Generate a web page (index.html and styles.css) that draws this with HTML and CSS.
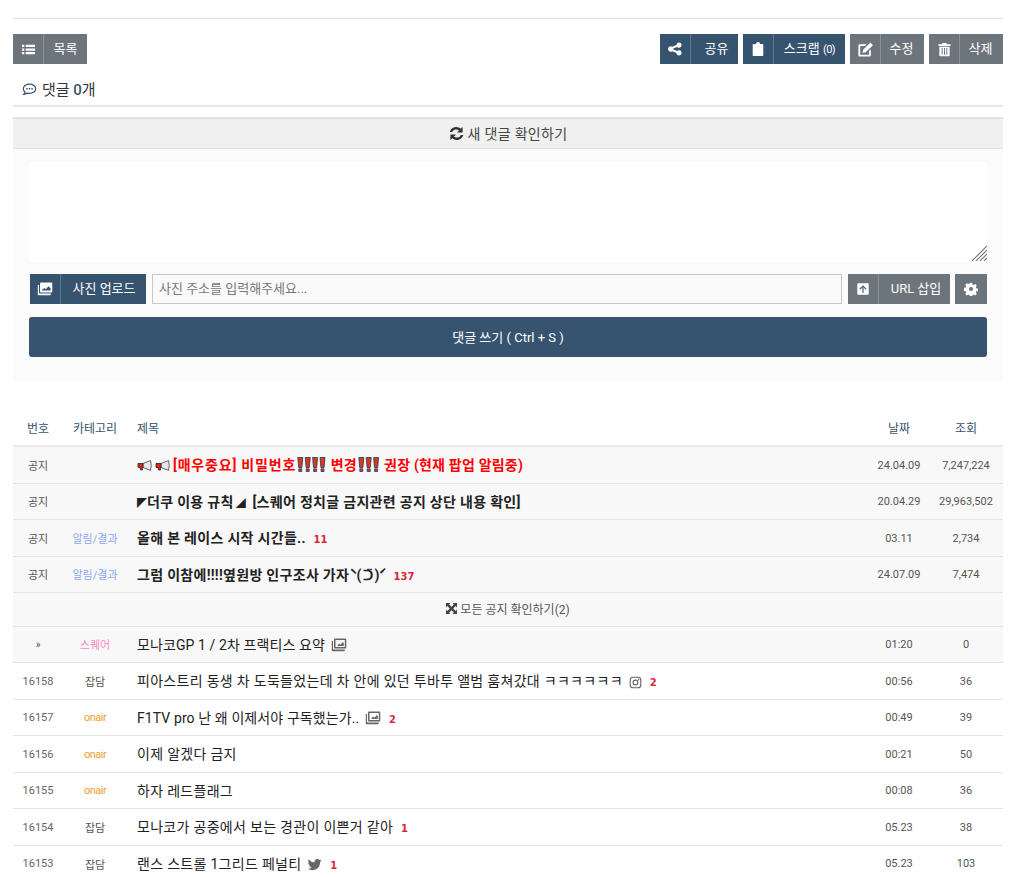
FILE: index.html
```html
<!DOCTYPE html>
<html lang="ko">
<head>
<meta charset="utf-8">
<title>댓글</title>
<link rel="stylesheet" href="styles.css">
</head>
<body>
<div class="page">
  <hr class="top-rule">
  <div class="toolbar">
    <a class="btn gray list"><span class="ico"><svg viewBox="0 0 16 16" width="15" height="15"><path fill="currentColor" d="M1 3h2.500v2.400H1zM5 3h10v2.400H5zM1 6.800h2.500v2.400H1zM5 6.800h10v2.400H5zM1 10.600h2.500V13H1zM5 10.600h10V13H5z"/></svg></span><span class="lab">목록</span></a>
    <div class="actions">
      <a class="btn navy share"><span class="ico"><svg viewBox="0 0 16 16" width="16" height="16"><path fill="currentColor" d="M12 1.500a2.600 2.600 0 1 1-1.900 4.400L6.300 7.600a2.700 2.700 0 0 1 0 .8l3.800 1.700A2.600 2.600 0 1 1 9.400 12L5.300 10.200a2.700 2.700 0 1 1 0-4.400L9.400 4A2.600 2.600 0 0 1 12 1.500z"/></svg></span><span class="lab">공유</span></a>
      <a class="btn navy scrap"><span class="ico"><svg viewBox="0 0 16 16" width="16" height="16"><path fill="currentColor" d="M3.500 3H6a2 2 0 0 1 4 0h2.500a.8.800 0 0 1 .8.800v10.400a.8.800 0 0 1-.8.800h-9a.8.800 0 0 1-.8-.8V3.800a.8.800 0 0 1 .8-.8z"/></svg></span><span class="lab">스크랩 <small>(0)</small></span></a>
      <a class="btn gray edit"><span class="ico"><svg viewBox="0 0 16 16" width="17" height="17"><path fill="currentColor" d="M2.500 3H9L7.500 4.600H3v8.400h8.400V9.300L13 7.700v5.800a1.200 1.200 0 0 1-1.200 1.200H2.500a1.200 1.200 0 0 1-1.200-1.200V4.200A1.200 1.200 0 0 1 2.500 3zM12.600 1.500l2.400 2.400-6.800 6.800-3 .6.600-3z"/></svg></span><span class="lab">수정</span></a>
      <a class="btn gray del"><span class="ico"><svg viewBox="0 0 16 16" width="15" height="15"><path fill="currentColor" fill-rule="evenodd" d="M6 1h4l.8 1.500h3.700v1.700h-13V2.500h3.700zM2.500 5h11v9a1.200 1.200 0 0 1-1.200 1.200H3.700A1.200 1.200 0 0 1 2.500 14zM5 6.500v7h1v-7zM7.500 6.500v7h1v-7zM10 6.500v7h1v-7z"/></svg></span><span class="lab">삭제</span></a>
    </div>
  </div>

  <h3 class="comment-title"><svg viewBox="0 0 16 16" width="15" height="15"><path fill="none" stroke="currentColor" stroke-width="1.300" d="M8 2.200c3.700 0 6.600 2.200 6.600 5s-2.900 5-6.600 5c-.9 0-1.700-.1-2.500-.4-1 .8-2.200 1.200-3.500 1.300.6-.6 1.100-1.500 1.200-2.400C2.200 9.800 1.400 8.600 1.400 7.200c0-2.800 2.900-5 6.600-5z"/><path fill="currentColor" d="M4.500 6.400h1.500v1.500H4.500zM7.250 6.400h1.500v1.500h-1.500zM10 6.400h1.500v1.500H10z"/></svg><span>댓글 <b>0</b>개</span></h3>

  <div class="refresh"><svg viewBox="0 0 16 16" width="15" height="15"><path fill="currentColor" d="M14.500 1V7H8.500L10.700 4.800A4.700 4.700 0 0 0 3.300 6.500H.7A7.200 7.200 0 0 1 12.500 3zM1.500 15V9H7.500L5.300 11.200A4.700 4.700 0 0 0 12.700 9.500H15.300A7.200 7.200 0 0 1 3.500 13z"/></svg><span>새 댓글 확인하기</span></div>

  <div class="write">
    <div class="textarea"><svg class="grip" viewBox="0 0 16 16" width="16" height="16"><path stroke="#777" stroke-width="1.100" d="M1 16 16 1M5 16 16 5M9 16l7-7M13 16l3-3"/></svg></div>
    <div class="url-row">
      <a class="btn navy upload"><span class="ico"><svg viewBox="0 1 16 16" width="16" height="16"><path fill="currentColor" fill-rule="evenodd" d="M4 2.500h10.300a1 1 0 0 1 1 1v8a1 1 0 0 1-1 1H4a1 1 0 0 1-1-1v-8a1 1 0 0 1 1-1zM5 4.300v6.200h8.500V8.200l-2-2-2.700 3-1.500-1.300L5 10z"/><path fill="currentColor" d="M.8 5H2v7.500A1 1 0 0 0 3 13.500h10.800v.9a.8.800 0 0 1-.8.800H1.600a.8.800 0 0 1-.8-.8z"/></svg></span><span class="lab">사진 업로드</span></a>
      <div class="url-input">사진 주소를 입력해주세요...</div>
      <a class="btn gray urlbtn"><span class="ico"><svg viewBox="0 0 16 16" width="14" height="14"><path fill="currentColor" fill-rule="evenodd" d="M2.500 1.500h11a1 1 0 0 1 1 1v11a1 1 0 0 1-1 1h-11a1 1 0 0 1-1-1v-11a1 1 0 0 1 1-1zM8 3.500 3.800 7.700l1.100 1.100L7.200 6.600v6h1.600v-6l2.300 2.200 1.100-1.100z"/></svg></span><span class="lab">URL 삽입</span></a>
      <a class="btn gray gear"><svg viewBox="0 0 16 16" width="14" height="14"><path fill="currentColor" fill-rule="evenodd" d="M6.700.8h2.600l.4 2 1.400.6 1.700-1.100 1.800 1.800-1.100 1.700.6 1.400 2 .4v2.600l-2 .4-.6 1.400 1.100 1.700-1.800 1.800-1.700-1.100-1.400.6-.4 2H6.700l-.4-2-1.400-.6-1.700 1.100-1.800-1.800 1.100-1.700-.6-1.400-2-.4V6.600l2-.4.6-1.400-1.100-1.700 1.800-1.800 1.700 1.100 1.400-.6zM8 5.700a2.300 2.300 0 1 0 0 4.600 2.300 2.300 0 0 0 0-4.600z"/></svg></a>
    </div>
    <a class="submit">댓글 쓰기 ( Ctrl + S )</a>
  </div>

  <div class="board">
    <div class="row head"><div class="num">번호</div><div class="cat">카테고리</div><div class="title">제목</div><div class="date">날짜</div><div class="views">조회</div></div>

    <div class="row notice"><div class="num">공지</div><div class="cat"></div><div class="title strong red"><svg class="emo" viewBox="0 0 16 11" width="16" height="11"><use href="#horn"/></svg><svg class="emo" viewBox="0 0 16 11" width="16" height="11"><use href="#horn"/></svg><span class="wide">[매우중요] 비밀번호</span><svg class="bang" viewBox="0 0 29 15" width="29" height="15"><use href="#b"/></svg> 변경<svg class="bang" viewBox="0 0 21.500 15" width="21.500" height="15"><use href="#b"/></svg> 권장 (현재 팝업 알림중)</div><div class="date">24.04.09</div><div class="views">7,247,224</div></div>
    <div class="row notice"><div class="num">공지</div><div class="cat"></div><div class="title strong"><span class="tri">◤</span>더쿠 이용 규칙<span class="tri end">◢</span> [스퀘어 정치글 금지관련 공지 상단 내용 확인]</div><div class="date">20.04.29</div><div class="views">29,963,502</div></div>
    <div class="row notice"><div class="num">공지</div><div class="cat blue">알림/결과</div><div class="title strong">올해 본 레이스 시작 시간들.. <b class="cnt">11</b></div><div class="date">03.11</div><div class="views">2,734</div></div>
    <div class="row notice"><div class="num">공지</div><div class="cat blue">알림/결과</div><div class="title strong">그럼 이참에!!!!옆원방 인구조사 가자<span class="face">ˋ( ᑐ̈ )ˊ</span> <b class="cnt">137</b></div><div class="date">24.07.09</div><div class="views">7,474</div></div>

    <div class="all-notice"><svg viewBox="0 0 16 16" width="11" height="11"><path fill="currentColor" d="M0 0h6.500L4.500 2 8 5.500 11.500 2l-2-2H16v6.500l-2-2L10.500 8l3.500 3.500 2-2V16H9.500l2-2L8 10.500 4.500 14l2 2H0V9.500l2 2L5.500 8 2 4.500l-2 2z"/></svg><span>모든 공지 확인하기<span class="paren">(2)</span></span></div>

    <div class="row notice"><div class="num small">»</div><div class="cat pink">스퀘어</div><div class="title mix">모나코GP 1 / 2차 프랙티스 요약<svg class="att" viewBox="0 1 16 16" width="16" height="16"><use href="#pic"/></svg></div><div class="date">01:20</div><div class="views">0</div></div>
    <div class="row"><div class="num">16158</div><div class="cat">잡담</div><div class="title">피아스트리 동생 차 도둑들었는데 차 안에 있던 투바투 앨범 훔쳐갔대 ㅋㅋㅋㅋㅋㅋ<svg class="att" viewBox="0 0 16 16" width="13" height="13"><rect x="1.500" y="1.500" width="13" height="13" rx="3.500" fill="none" stroke="currentColor" stroke-width="1.400"/><circle cx="8" cy="8" r="3" fill="none" stroke="currentColor" stroke-width="1.400"/><circle cx="11.800" cy="4.200" r=".9" fill="currentColor"/></svg> <b class="cnt">2</b></div><div class="date">00:56</div><div class="views">36</div></div>
    <div class="row"><div class="num">16157</div><div class="cat orange">onair</div><div class="title mix">F1TV pro 난 왜 이제서야 구독했는가..<svg class="att" viewBox="0 1 16 16" width="16" height="16"><use href="#pic"/></svg> <b class="cnt">2</b></div><div class="date">00:49</div><div class="views">39</div></div>
    <div class="row"><div class="num">16156</div><div class="cat orange">onair</div><div class="title">이제 알겠다 금지</div><div class="date">00:21</div><div class="views">50</div></div>
    <div class="row"><div class="num">16155</div><div class="cat orange">onair</div><div class="title">하자 레드플래그</div><div class="date">00:08</div><div class="views">36</div></div>
    <div class="row"><div class="num">16154</div><div class="cat">잡담</div><div class="title">모나코가 공중에서 보는 경관이 이쁜거 같아 <b class="cnt">1</b></div><div class="date">05.23</div><div class="views">38</div></div>
    <div class="row"><div class="num">16153</div><div class="cat">잡담</div><div class="title">랜스 스트롤 1그리드 페널티<svg class="att" viewBox="0 0 16 16" width="15" height="15"><path fill="currentColor" d="M15.500 3.400c-.5.300-1.100.400-1.700.500.600-.4 1.100-.9 1.300-1.600-.6.300-1.200.600-1.900.7A3 3 0 0 0 8.100 5.700 8.500 8.500 0 0 1 1.800 2.600a3 3 0 0 0 .9 4c-.5 0-1-.1-1.400-.4 0 1.500 1 2.700 2.400 3-.4.100-.9.100-1.300 0 .4 1.200 1.500 2 2.800 2.100a6 6 0 0 1-4.400 1.300A8.500 8.500 0 0 0 14 5.200c.6-.5 1.100-1.100 1.500-1.800z"/></svg> <b class="cnt">1</b></div><div class="date">05.23</div><div class="views">103</div></div>
  </div>
</div>
<svg class="defs" width="0" height="0"><defs>
  <g id="bone"><path fill="#d93a12" stroke="#1f3a6b" stroke-width=".8" d="M.8.500h5l-.9 10H1.700z"/><path fill="#d93a12" stroke="#1f3a6b" stroke-width=".8" d="M1.800 11.800h3v2.700h-3z"/></g>
  <g id="b"><use href="#bone"/><use href="#bone" x="7.400"/><use href="#bone" x="14.800"/><use href="#bone" x="22.200"/></g>
  <g id="horn"><path fill="#e8e8e8" stroke="#555" stroke-width=".9" d="M6 3.500 13.500.6q1.500 4.900 0 9.800L6 7.500z"/><path fill="#d9281e" stroke="#222" stroke-width=".8" d="M1 3.500h5v4H5l.6 2.500H3.600L3 7.500H1z"/></g>
  <g id="pic"><path fill="currentColor" fill-rule="evenodd" d="M4 2.500h10.300a1 1 0 0 1 1 1v8a1 1 0 0 1-1 1H4a1 1 0 0 1-1-1v-8a1 1 0 0 1 1-1zM4.500 4v7h9.300V4zM6 10l2.200-2.500 1.300 1.200 2.300-2.700 1 1V10z"/><path fill="currentColor" d="M.8 5H2v7.500A1 1 0 0 0 3 13.500h10.800v.9a.8.800 0 0 1-.8.800H1.600a.8.800 0 0 1-.8-.8z"/></g>
</defs></svg>
</body>
</html>
```
FILE: styles.css
```css
* { box-sizing: border-box; }
html, body { margin: 0; padding: 0; background: #fff; }
body { font-family: Roboto, "Noto Sans CJK KR", sans-serif; font-size: 13px; color: #333; height: 877px; overflow: hidden; }
.page { padding: 18px 12px 0 13px; }
.top-rule { margin: 0; border: 0; border-top: 1px solid #e0e0e0; }
.toolbar { display: flex; justify-content: space-between; margin-top: 15px; }
.actions { display: flex; gap: 5px; }
.btn { display: flex; align-items: stretch; height: 30px; color: #fff; font-size: 13px; line-height: 30px; }
.btn.navy { background: #36536f; }
.btn.gray { background: #6c747c; }
.btn .ico { width: 31px; display: flex; align-items: center; justify-content: center; border-right: 1px solid rgba(255,255,255,.22); flex: none; }
.btn .lab { flex: 1; text-align: center; white-space: nowrap; }
.btn small { font-size: 11px; letter-spacing: -.5px; }
.list { width: 74px; }
.share { width: 78px; }
.share .lab { padding-left: 4px; }
.scrap { width: 102px; }
.edit, .del { width: 74px; }
.edit .lab, .del .lab { padding-right: 2px; }
.comment-title { margin: 16px 0 0; padding: 0 0 0 9px; height: 27px; font-size: 15px; font-weight: 400; line-height: 20px; color: #333; display: flex; align-items: flex-start; gap: 5px; border-bottom: 2px solid #e8e8e8; }
.comment-title svg { color: #36536f; margin-top: 2px; }
.comment-title b { font-weight: 500; color: #36536f; }
.refresh { margin-top: 10px; height: 32px; padding-bottom: 1px; background: #f0f0f0; border-top: 2px solid #e2e2e2; border-bottom: 1px solid #e2e2e2; display: flex; align-items: center; justify-content: center; gap: 4px; font-size: 14px; letter-spacing: .3px; color: #444; }
.refresh svg { color: #333; }
.write { background: #fbfbfb; height: 232px; padding: 13px 16px 0; }
.textarea { height: 100px; background: #fff; display: flex; justify-content: flex-end; align-items: flex-end; }
.grip { display: block; margin-bottom: 1px; }
.url-row { display: flex; margin-top: 12px; padding-left: 1px; }
.upload { width: 116px; }
.upload .lab { padding-left: 1px; }
.url-input { flex: 1; margin: 0 6px; height: 30px; border: 1px solid #c8c8c8; background: #fafafa; padding-left: 6px; line-height: 28px; font-size: 13px; color: #777; }
.urlbtn { width: 102px; }
.urlbtn .lab { padding-left: 3px; }
.gear { width: 32px; margin-left: 5px; align-items: center; justify-content: center; }
.submit { display: block; margin-top: 13px; height: 40px; line-height: 41px; text-align: center; background: #36536f; color: #fff; border-radius: 3px; font-size: 13px; }
.board { margin-top: 29px; }
.row { display: grid; grid-template-columns: 50px 64px 1fr 60px 74px; align-items: center; height: 36.5px; border-bottom: 1px solid #e4e4e4; font-size: 11px; color: #555; }
.row.head { height: 37px; border-bottom: 2px solid #e8e8e8; font-size: 12px; color: #36536f; }
.row.notice { background: #f8f8f8; }
.num, .cat, .date, .views { text-align: center; white-space: nowrap; }
.row:not(.head) .date, .row:not(.head) .views { padding-top: 1px; }
.row:not(.notice):not(.head) .num, .row:not(.notice):not(.head) .cat { padding-top: 1px; }
.row:not(.notice):not(.head) .num { color: #666; }
.title { padding: 0 0 1px 10px; white-space: nowrap; font-size: 14px; letter-spacing: .3px; color: #222; display: block; }
.title.mix { letter-spacing: .1px; }
.head .title { font-size: 12px; letter-spacing: 0; padding-bottom: 0; color: #36536f; }
.title.strong { font-weight: 700; color: #222; }
.title.red { color: #f00; letter-spacing: .2px; }
.wide { letter-spacing: .8px; }
.tri { font-size: 10px; letter-spacing: 0; }
.tri.end { margin: 0 3px 0 2px; }
.face { letter-spacing: -1px; }
.blue { color: #8aa8f0; }
.pink { color: #f58cc0; }
.orange { color: #f0a030; letter-spacing: -.5px; }
.cnt { font-family: "DejaVu Sans", sans-serif; color: #d9293f; font-size: 10px; font-weight: 700; margin-left: 4px; letter-spacing: 0; }
.emo { vertical-align: -1px; margin-right: 2px; }
.bang { vertical-align: -2px; margin: 0 1px; }
.att { vertical-align: -3px; margin-left: 6px; color: #666; }
.num.small { font-size: 10px; }
.all-notice { height: 33.5px; padding-bottom: 1px; background: #f8f8f8; border-bottom: 1px solid #e4e4e4; display: flex; align-items: center; justify-content: center; gap: 3px; font-size: 12px; color: #555; }
.all-notice svg { color: #444; }
.defs { position: absolute; }
```
